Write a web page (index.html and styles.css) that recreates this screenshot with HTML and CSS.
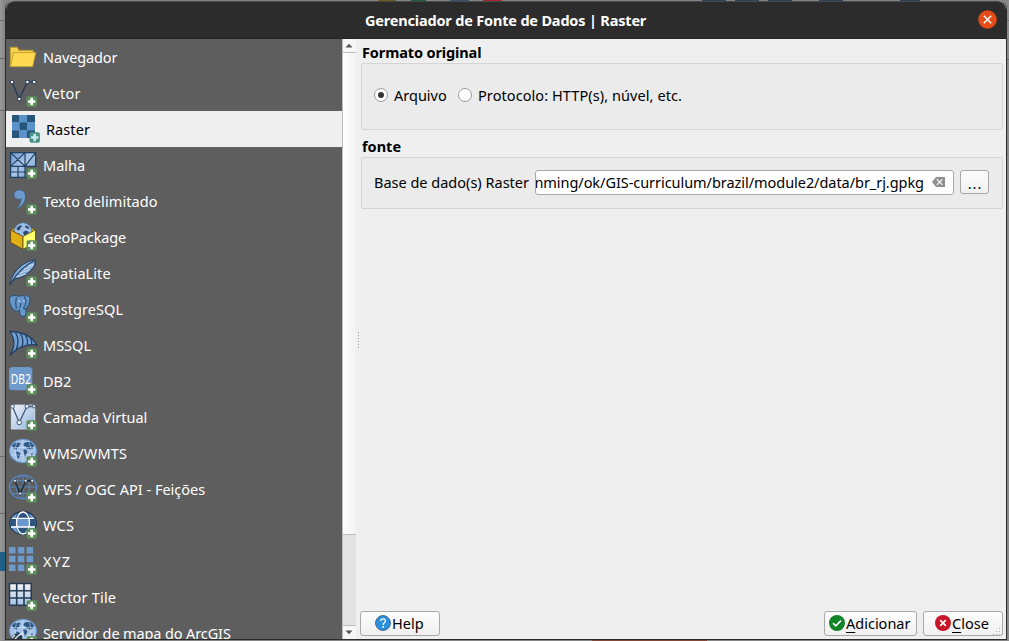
FILE: index.html
```html
<!DOCTYPE html>
<html lang="pt-BR">
<head>
<meta charset="utf-8">
<title>Gerenciador de Fonte de Dados | Raster</title>
<link rel="stylesheet" href="styles.css">
</head>
<body>
<svg class="defs" width="0" height="0" aria-hidden="true">
  <defs>
    <linearGradient id="pale" x1="0" y1="0" x2="1" y2="1"><stop offset="0" stop-color="#f2f5f9"/><stop offset="1" stop-color="#8fb2dc"/></linearGradient>
    <linearGradient id="tile" x1="0" y1="0" x2="0" y2="1"><stop offset="0" stop-color="#f4f4f2"/><stop offset="1" stop-color="#a5c4ea"/></linearGradient>
    <linearGradient id="mesh" x1="0" y1="0" x2="1" y2="1"><stop offset="0" stop-color="#6b98ce"/><stop offset=".5" stop-color="#a9c6e8"/><stop offset="1" stop-color="#6b98ce"/></linearGradient>
    <g id="plus"><rect x="18.5" y="21.3" width="10.4" height="10.4" rx="1.8" fill="#5a9058"/><path d="M23.7 22.800v7.400M20 26.500h7.400" stroke="#fff" stroke-width="2.700"/></g>
    <g id="world">
      <ellipse cx="15" cy="16" rx="13.5" ry="11.7" fill="#a6c3e6" stroke="#6592c8" stroke-width="1.2"/>
      <path d="M4 10.500l3-2.500 4-.5 2 1.500-2 1 .5 1.500-2.500 1.500-.5 2-2-1-1.500-1.500zM8 16.500l3 .5 1.500 2-1 2.500-1.500 3-1.200-3.500zM15.500 8.500l3-1.500 4 0 3.500 3.500-1 3-2 .5-.5 2-1.500-2.500-2 .3-1-2.300-2.500-.5zM14.500 14.500l3.500 0 1.500 2-1 2.500-1 2.500-1.500-1.500-.3-3zM22.500 18.500l2.500 0-.5 2-1.500 0z" fill="#2f5a87"/>
      <path d="M3 12.500h24M3 20h24M15 4.500v23M9.500 6c-3 6-3 14 0 20M20.500 6c3 6 3 14 0 20" fill="none" stroke="#dbe8f6" stroke-width=".7" opacity=".7"/>
    </g>
  </defs>
</svg>
<div class="desktop">
  <div class="toolbar-strip">
    <i class="bit olive"></i><i class="bit green"></i><i class="bit blue"></i><i class="bit red"></i><i class="bit navy n1"></i><i class="bit navy n2"></i><i class="bit navy n3"></i><i class="bit navy n4"></i><i class="bit navy n5"></i>
  </div>
  <i class="edge e1"></i><i class="edge e2"></i><i class="edge e3"></i><i class="edge e4"></i><i class="edge e5"></i><i class="edge sel"></i><i class="edge rust"></i><i class="edge r1"></i><i class="edge r2"></i>

  <main class="window">
    <header class="titlebar">
      <h1 class="title">Gerenciador de Fonte de Dados | Raster</h1>
      <button class="close" aria-label="Fechar"><svg width="19" height="19" viewBox="0 0 19 19"><circle cx="9.5" cy="9.5" r="9.3" fill="#e34c18"/><path d="M5.8 5.8l7.4 7.4M13.2 5.8l-7.4 7.4" stroke="#fff" stroke-width="1.5"/></svg></button>
    </header>
    <div class="body">
      <nav class="sidebar">
        <div class="item"><svg class="icon" viewBox="0 0 30 36"><path d="M2.3 27.5V8.3h7l1.6 3h14.3v4" fill="#f5d14c" stroke="#b99a2b"/><path d="M5.6 13.6h22.2l-3.2 14H2.4z" fill="#ffd950" stroke="#c4a437"/></svg><span class="tight">Navegador</span></div>
        <div class="item"><svg class="icon" viewBox="0 0 30 36"><path d="M4 7l7.3 17L19.4 7h6.8" fill="none" stroke="#2b4059" stroke-width="1.6"/><g fill="#fff" stroke="#2b4059" stroke-width="1.1"><circle cx="4" cy="7" r="1.8"/><circle cx="11.3" cy="24" r="1.8"/><circle cx="19.4" cy="7" r="1.8"/><circle cx="26.2" cy="7" r="1.8"/></g><use href="#plus"/></svg><span class="wide">Vetor</span></div>
        <div class="item selected"><svg class="icon" viewBox="0 0 30 36"><path fill="#5b92c8" d="M1 4h23v23H1z"/><path fill="#28557e" d="M1 4h7v7H1zM16 4h8v7h-8zM8.700 11.500h7.300v7.500H8.700zM1 19.500h7V27H1zM16 19.500h8V27h-8z"/><rect x="18.500" y="21.300" width="10.400" height="10.400" rx="1.800" fill="#4a9080"/><path d="M23.700 22.800v7.400M20 26.500h7.400" stroke="#c5e6f0" stroke-width="2.600"/></svg><span class="loose">Raster</span></div>
        <div class="item"><svg class="icon" viewBox="0 0 30 36"><path d="M2.600 5.600h25v13.800H17.500v11h-15z" fill="url(#mesh)"/><path d="M2.600 5.600h25v13.800h-25zM17 5.600V30.400M2.600 5.600l14.400 13.800M17 5.600L2.600 19.400M27.600 5.600L17 19.400M2.600 19.400v11H20M2.600 25H20M10 19.400v11" fill="none" stroke="#22405f" stroke-width="1.200"/><use href="#plus"/></svg><span>Malha</span></div>
        <div class="item"><svg class="icon" viewBox="0 0 30 36"><path d="M11.300 7C7.500 7 6 9.500 6 12c0 3 2.500 4.600 5.200 4.300 1 0 1.600-.3 2-.5-.2 4-2 7.200-5.200 10C13 24.500 17.500 20 17.500 13.500 17.500 9 15 7 11.300 7z" fill="#6d9aca" stroke="#385d85" stroke-width=".8"/><use href="#plus"/></svg><span class="loose">Texto delimitado</span></div>
        <div class="item"><svg class="icon" viewBox="0 0 30 36"><path d="M2.500 11L15 6l12.500 5L15 17.500z" fill="#caa30c"/><circle cx="15" cy="12.500" r="8.800" fill="#a0bfe4" stroke="#456f9d" stroke-width=".7"/><path d="M9 8.500l3.500-2.500 1.500 1.500-2 1.500.5 1.500-2.500 1-1.500-1.500zM17 6.500l3 .5 1.500 3-2.500-.5-1.500-1zM15 13l3-1.500 3 1.500-2.500 2.500-2.500.8zM9 14l2.500.8 0 2.200-2-1.500z" fill="#294c72"/><path d="M2.500 10.800L15 17.500v12.800L2.500 23.500z" fill="#e3af16" stroke="#55430b" stroke-width=".8"/><path d="M27.500 10.800L15 17.500v12.800l12.500-6.800z" fill="#ffff70" stroke="#55430b" stroke-width=".8"/><use href="#plus"/></svg><span class="tight">GeoPackage</span></div>
        <div class="item"><svg class="icon" viewBox="0 0 30 36"><path d="M1.600 30.500c.8-4.500 1.200-7.500 4.400-12C10.500 11.500 17.500 6.500 27.500 4.300c-1 2.700-.6 4-.6 6-1.600 2.800-3.300 4.700-5.400 6.500-4 3.500-8.500 6.500-15 7-2.300 1.700-3.800 4-4.900 6.700z" fill="#85acd8" stroke="#26425f" stroke-width="1.100"/><path d="M4 26.500C9 18 16 11 26.500 5.500" fill="none" stroke="#26425f" stroke-width="1.200"/><path d="M9 21.500l9-2.500M12 18l10-3.500M15.500 14.500l9.500-3.500M20 11l6-2" fill="none" stroke="#c9dcf1" stroke-width="1"/><use href="#plus"/></svg><span class="loose">SpatiaLite</span></div>
        <div class="item"><svg class="icon" viewBox="0 0 30 36"><path d="M5 4.700c3-.6 4.500.6 6.500.5 2-.7 3.500-.8 5-.1 3-.9 5.700.5 5.500 3.600-.3 3.300-1.600 6.500-4 8.800v4.800c0 3.700-5.500 4.300-6.200.7l-.2-4.500c-1.500 2-3.600 2.200-5 .8C3 16.500 1.200 12 1.400 8.500c0-2.200 1.400-3.500 3.600-3.800z" fill="#6796c8" stroke="#28517a" stroke-width="1"/><path d="M8.500 6.500c-1.200 4-1 7 0 11.500M16 5.500c3 3.500 2 8-.5 11.500 1 1 2.500.8 3.500.4M11 16.500c1.500-1 2-2.500 1.500-4.500" fill="none" stroke="#28517a" stroke-width="1.100"/><path d="M9.800 10h2.400M15 10h1.800" stroke="#cfe0f3"/><use href="#plus"/></svg><span class="loose">PostgreSQL</span></div>
        <div class="item"><svg class="icon" viewBox="0 0 30 36"><path d="M2 4.500c12 .4 21.500 4 26.800 13.500-8-1.500-18 1-27.300 10.500C7 21 7.500 13 2 4.500z" fill="#6f9fd3" stroke="#233f63" stroke-width="1.300"/><path d="M7.500 5.500c3.500 6 3.500 11 .5 17.500M12.500 6.500c3 5 3.300 8.500 1.200 14M17.500 8.300c2.300 4 2.600 7 1.500 10.500M22.500 11.200c1.300 2.500 1.500 4.500 1 7" fill="none" stroke="#233f63" stroke-width="1.300"/><use href="#plus"/></svg><span>MSSQL</span></div>
        <div class="item"><svg class="icon" viewBox="0 0 30 36"><rect x="1" y="4" width="23.300" height="23.300" rx="3.500" fill="#6d9aca"/><text class="db-text" x="2.800" y="20.500" textLength="20" lengthAdjust="spacingAndGlyphs">DB2</text><use href="#plus"/></svg><span>DB2</span></div>
        <div class="item"><svg class="icon" viewBox="0 0 30 36"><path d="M3.300 6h23.500v24H3.300z" fill="url(#pale)" stroke="#d8e2ee" stroke-width=".8"/><path d="M4.500 7.500l6.700 16L19 7.500h7.500" fill="none" stroke="#415c7a" stroke-width="1.300"/><g fill="#e9f0f8" stroke="#415c7a"><circle cx="4.500" cy="7.300" r="1.900"/><circle cx="11.200" cy="23.500" r="2.300"/><circle cx="19" cy="7.300" r="2"/><circle cx="26" cy="7.300" r="1.700"/></g><use href="#plus"/></svg><span>Camada Virtual</span></div>
        <div class="item"><svg class="icon" viewBox="0 0 30 36"><use href="#world"/><use href="#plus"/></svg><span class="wide">WMS/WMTS</span></div>
        <div class="item"><svg class="icon" viewBox="0 0 30 36"><g fill="none" stroke="#5586bf"><ellipse cx="15" cy="16" rx="13.500" ry="11.700" stroke-width="1.500"/><ellipse cx="15" cy="16" rx="6.500" ry="11.700"/><path d="M15 4v24M1.500 16h27M4 9.500h22M4 22.500h22"/></g><path d="M7 9.800l5.200 13 5.500-13h6.500" fill="none" stroke="#22303f" stroke-width="1.700"/><g fill="#fff" stroke="#22303f" stroke-width=".6"><circle cx="7" cy="9.800" r="1.400"/><circle cx="12.200" cy="22.600" r="1.400"/><circle cx="17.700" cy="9.800" r="1.400"/><circle cx="24.200" cy="9.800" r="1.400"/></g><use href="#plus"/></svg><span>WFS / OGC API - Feições</span></div>
        <div class="item"><svg class="icon" viewBox="0 0 30 36"><ellipse cx="15" cy="16" rx="13.300" ry="11.500" fill="#6b98cc" stroke="#23364d" stroke-width="1.300"/><path d="M9 6h12l1 5H8zM2 12h6v7H2zM22 12h6v7h-6zM8 20h14l-2 6H10z" fill="#2c547f"/><g fill="none" stroke="#fff" stroke-width="1.300"><ellipse cx="15" cy="16" rx="6.500" ry="11"/><path d="M4 11.300h22M3 20h24"/></g><use href="#plus"/></svg><span class="wide">WCS</span></div>
        <div class="item"><svg class="icon" viewBox="0 0 30 36"><path d="M1 4h6.500v6.500H1zM9.800 4h6.500v6.500H9.800zM18.600 4h6.500v6.500h-6.500zM1 12.800h6.500v6.500H1zM9.800 12.800h6.500v6.500H9.800zM18.600 12.800h6.500v6.500h-6.500zM1 21.500h6.500V28H1zM9.800 21.500h6.500V28H9.800zM18.600 21.500h6.500V28h-6.500z" fill="#6d9aca"/><use href="#plus"/></svg><span class="widest">XYZ</span></div>
        <div class="item"><svg class="icon" viewBox="0 0 30 36"><path d="M1.500 4.500h21.700v21.700H1.500z" fill="url(#tile)" stroke="#263b54" stroke-width="1.500"/><path d="M8.700 4v22.500M16 4v22.500M1 11.800h22.500M1 19h22.500" stroke="#263b54" stroke-width="1.600"/><use href="#plus"/></svg><span class="wide">Vector Tile</span></div>
        <div class="item"><svg class="icon" viewBox="0 0 30 36"><use href="#world"/><path d="M2.500 27c0-6 3.500-9 7.500-8.500l4 2 1 6.500z" fill="#26384c"/><path d="M4 23l3-3M6 25l5-5 4-2" stroke="#e5e9ed" stroke-width="1.400" fill="none"/><use href="#plus"/></svg><span class="tight">Servidor de mapa do ArcGIS</span></div>
      </nav>
      <div class="scrollbar">
        <div class="arrow up"><svg width="8" height="5" viewBox="0 0 8 5"><path d="M.5 4.500L4 .7l3.500 3.800z" fill="#555"/></svg></div>
        <div class="thumb"></div>
        <div class="groove"></div>
        <div class="arrow down"><svg width="8" height="5" viewBox="0 0 8 5"><path d="M.5.500L4 4.300 7.500.500z" fill="#555"/></svg></div>
      </div>
      <div class="splitter"><i></i><i></i><i></i><i></i><i></i><i></i></div>
      <section class="panel">
        <h2 class="group-title">Formato original</h2>
        <div class="group format">
          <span class="radio on"></span><span class="radio-label">Arquivo</span>
          <span class="radio"></span><span class="radio-label loose">Protocolo: HTTP(s), núvel, etc.</span>
        </div>
        <h2 class="group-title second">fonte</h2>
        <div class="group source">
          <label class="src-label">Base de dado(s) Raster</label>
          <div class="field"><div class="clip"><span class="path">nming/ok/GIS-curriculum/brazil/module2/data/br_rj.gpkg</span></div><svg class="clear" width="13" height="10" viewBox="0 0 13 10"><path d="M0 5L4 0h9v10H4z" fill="#8f8f8f"/><path d="M4.800 2.200l5.600 5.600M10.400 2.200L4.800 7.800" stroke="#fff" stroke-width="1.100"/></svg></div>
          <button class="btn browse">...</button>
        </div>
        <footer class="actions">
          <button class="btn help"><svg width="16" height="16" viewBox="0 0 16 16"><circle cx="8" cy="8" r="7.500" fill="#2a90dc" stroke="#3f6790" stroke-width=".9"/><path d="M5.700 6c.2-3 4.800-2.800 4.700-.1 0 1.800-2.300 1.900-2.300 4" fill="none" stroke="#fff" stroke-width="1.300"/><circle cx="8.100" cy="12" r=".9" fill="#fff"/></svg><span>Help</span></button>
          <button class="btn add"><svg width="16" height="16" viewBox="0 0 16 16"><circle cx="8" cy="8" r="8" fill="#128327"/><path d="M4 8.200l2.800 2.600L12 5.600" fill="none" stroke="#fff" stroke-width="1.600"/></svg><span><u>A</u>dicionar</span></button>
          <button class="btn shut"><svg width="16" height="16" viewBox="0 0 16 16"><circle cx="8" cy="8" r="8" fill="#c7162b"/><path d="M5.200 5.200l5.600 5.600M10.800 5.200l-5.600 5.600" stroke="#fff" stroke-width="1.700"/></svg><span><u>C</u>lose</span></button>
        </footer>
      </section>
    </div>
    <svg class="grip" width="11" height="11" viewBox="0 0 11 11"><path d="M9 0h1v1H9zM6 3h1v1H6zM9 3h1v1H9zM3 6h1v1H3zM6 6h1v1H6zM9 6h1v1H9zM0 9h1v1H0zM3 9h1v1H3zM6 9h1v1H6zM9 9h1v1H9z" fill="#aaa"/></svg>
  </main>
</div>
</body>
</html>
```
FILE: styles.css
```css
* { box-sizing: border-box; }
body { margin: 0; font: 14.5px/20px "Noto Sans", "Open Sans", sans-serif; color: #000; overflow: hidden; }
.defs { position: absolute; }
button { font: inherit; color: inherit; margin: 0; padding: 0; border: 0; background: none; }
h1, h2 { margin: 0; font-size: inherit; font-weight: 700; }

.tight { letter-spacing: -.12px; }
.loose { letter-spacing: .08px; }
.wide { letter-spacing: .2px; }
.widest { letter-spacing: 1px; }

.desktop { position: relative; width: 1009px; height: 641px; padding: 1px 2px 1px 5px; background: linear-gradient(90deg, #989898 0, #858585 5px, #858585 1006px, #8c8c8c 100%); }
.toolbar-strip .bit, .edge { position: absolute; top: 0; height: 1px; }
.olive { left: 378px; width: 18px; background: #6b5d19; }
.green { left: 411px; width: 15px; background: #1d5b3b; }
.blue { left: 450px; width: 19px; background: #36546f; }
.red { left: 483px; width: 19px; background: #a72630; }
.navy { width: 24px; background: #29435d; }
.n1 { left: 702px; } .n2 { left: 735px; } .n3 { left: 768px; } .n4 { left: 819px; } .n5 { left: 900px; width: 20px; }
.edge { left: 0; width: 5px; background: #6b6b6b; }
.e1 { top: 20px; } .e2 { top: 58px; } .e3 { top: 110px; } .e4 { top: 456px; } .e5 { top: 513px; }
.sel { top: 552px; height: 19px; background: #205f87; }
.rust { top: 640px; left: 592px; width: 115px; background: #80493a; }
.r1 { left: 1007px; width: 2px; top: 20px; } .r2 { left: 1007px; width: 2px; top: 59px; }

.window { position: relative; height: 639px; border: 1px solid #2b2b2b; border-top: 0; border-radius: 8px 8px 0 0; overflow: hidden; background: #efefef; }
.titlebar { height: 38px; background: #2c2c2c; border-top: 1px solid #484848; border-bottom: 1px solid #232323; display: grid; grid-template-columns: 1fr auto; align-items: center; padding-right: 9px; border-radius: 8px 8px 0 0; }
.title { color: #fff; padding-left: 359px; white-space: nowrap; letter-spacing: -.18px; }
.close { display: flex; margin-top: -1px; }
.body { display: flex; height: 600px; }

.sidebar { width: 336px; flex: none; overflow: hidden; background: #5e5e5e; color: #fff; }
.item { height: 36px; display: flex; align-items: center; gap: 5px; padding-left: 2px; white-space: nowrap; }
.item.selected { background: #efefef; color: #000; padding-left: 5px; }
.icon { width: 30px; height: 36px; flex: none; }
.db-text { font: 13.5px "Noto Sans", sans-serif; fill: #fff; }

.scrollbar { width: 14px; flex: none; display: flex; flex-direction: column; border-left: 1px solid #bdbdbd; background: #e3e3e3; }
.arrow { height: 14px; display: flex; align-items: center; justify-content: center; background: #f7f7f7; padding-right: 1px; }
.up { height: 13px; }
.thumb { height: 483px; background: linear-gradient(90deg, #fff, #f2f2f2); border-top: 1px solid #bdbdbd; border-bottom: 1px solid #bdbdbd; }
.groove { flex: 1; }
.down { border-top: 1px solid #bdbdbd; }
.splitter { width: 5px; flex: none; display: flex; flex-direction: column; justify-content: center; align-items: center; gap: 2px; padding-top: 2px; }
.splitter i { width: 1px; height: 1px; background: #999; }

.panel { flex: 1; min-width: 0; padding: 3px 3px 3px 0; display: flex; flex-direction: column; }
.group-title { height: 21px; line-height: 20px; padding-left: 1px; white-space: nowrap; letter-spacing: -.12px; }
.group-title.second { margin-top: 6px; letter-spacing: 0; }
.group { border: 1px solid #d4d4d4; border-radius: 2px; background: #ebebeb; display: flex; align-items: center; white-space: nowrap; }
.format { height: 67px; padding-left: 12px; padding-bottom: 4px; }
.source { height: 52px; padding-left: 12px; padding-bottom: 2px; }
.radio { width: 14px; height: 14px; border: 1px solid #9c9c9c; border-radius: 50%; background: #fff; display: grid; place-items: center; }
.radio.on::after { content: ""; width: 6px; height: 6px; border-radius: 50%; background: #333; }
.radio-label { padding-left: 6px; width: 70px; }
.src-label { width: 161px; flex: none; }
.field { width: 419px; height: 25px; border: 1px solid #a9a9a9; border-radius: 3px; background: #fff; display: flex; align-items: center; flex: none; }
.clip { width: 388px; overflow: hidden; display: flex; justify-content: flex-end; }
.path { letter-spacing: -.05px; }
.clear { margin-left: 8px; margin-top: -1px; }
.btn { border: 1px solid #a9a9a9; border-radius: 3px; background: linear-gradient(#fdfdfd, #f0f0f0); display: flex; align-items: center; justify-content: center; white-space: nowrap; }
.browse { width: 29px; height: 24px; margin-left: 6px; letter-spacing: 1px; padding: 1px 0 0 1px; }
.actions { display: flex; margin-top: auto; align-items: center; }
.actions .btn { height: 25px; justify-content: flex-start; padding-bottom: 2px; }
.actions .btn svg { flex: none; }
.help { width: 80px; padding-left: 14px; margin-left: -1px; gap: 1px; }
.add { width: 93px; margin-left: auto; padding-left: 4px; gap: 1px; }
.shut { width: 80px; margin-left: 6px; padding-left: 11px; gap: 1px; }
.btn u { text-underline-offset: 3px; }
.grip { position: absolute; right: 2px; bottom: 3px; }
```
